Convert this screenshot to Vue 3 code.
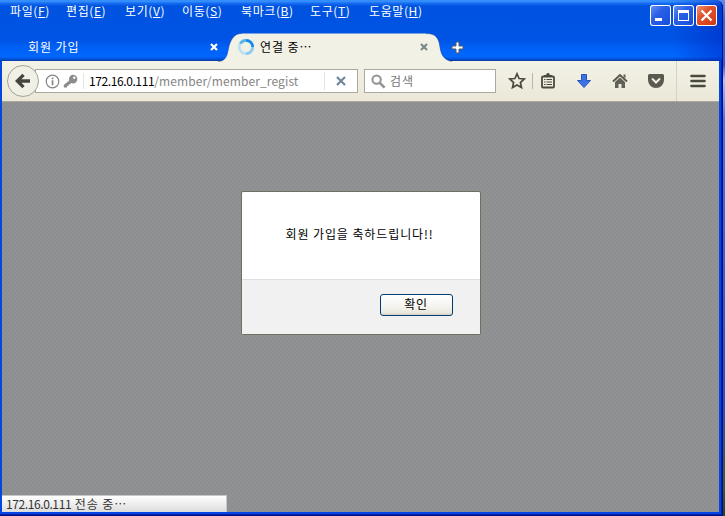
<script setup>
const menus = [
  { label: '파일', key: 'F' },
  { label: '편집', key: 'E' },
  { label: '보기', key: 'V' },
  { label: '이동', key: 'S' },
  { label: '북마크', key: 'B' },
  { label: '도구', key: 'T' },
  { label: '도움말', key: 'H' },
]
</script>

<template>
  <div class="desktop">
    <div class="window">
      <header class="chrome">
        <div class="top-row">
          <nav class="menus">
            <span v-for="m in menus" :key="m.key">{{ m.label }}(<u>{{ m.key }}</u>)</span>
          </nav>
          <div class="controls">
            <button class="ctl" aria-label="minimize">
              <svg width="21" height="21"><rect x="5" y="13" width="7" height="3" fill="#fff" /></svg>
            </button>
            <button class="ctl" aria-label="maximize">
              <svg width="21" height="21"><path d="M5 5h11v11H5z M6 8v7h9V8z" fill="#fff" fill-rule="evenodd" /></svg>
            </button>
            <button class="ctl close" aria-label="close">
              <svg width="21" height="21"><path d="M5.500 5.500l10 10M15.500 5.500l-10 10" stroke="#fff" stroke-width="2.300" /></svg>
            </button>
          </div>
        </div>
        <div class="tabs">
          <div class="tab">
            <span class="tab-title first">회원 가입</span>
            <svg width="8" height="8" viewBox="0 0 8 8"><path d="M1 1l6 6M7 1L1 7" stroke="#fff" stroke-width="2.200" /></svg>
          </div>
          <div class="tab active">
            <svg class="shape" width="234" height="29" viewBox="0 0 234 29">
              <path d="M0 28.500C11 28 9 17 12 10C15 3 18 .5 24 .5H208C216 .5 219 3 221 9C223 17 222 26 234 28.500V29H0Z" fill="#f2f1e5" />
              <path d="M0 28.500C11 28 9 17 12 10C15 3 18 .5 24 .5M208 .5C216 .5 219 3 221 9C223 17 222 26 234 28.500" fill="none" stroke="#073ba4" stroke-opacity=".55" />
            </svg>
            <svg class="spinner" width="18" height="18" viewBox="0 0 18 18" fill="none" stroke-width="2.700">
              <circle cx="9" cy="9" r="6.700" stroke="#b9e0f5" />
              <path d="M9 2.300A6.700 6.700 0 0 1 15.700 9" stroke="#168ce8" />
              <path d="M15.700 9A6.700 6.700 0 0 1 9 15.700" stroke="#8bcbf1" />
              <path d="M3.300 5.500A6.700 6.700 0 0 1 9 2.300" stroke="#58b5ef" />
            </svg>
            <span class="tab-title">연결 중<i>⋯</i></span>
            <svg class="tab-close" width="8" height="8" viewBox="0 0 8 8"><path d="M1 1l6 6M7 1L1 7" stroke="#7e8988" stroke-width="2.200" /></svg>
          </div>
          <svg class="plus" width="13" height="13" viewBox="0 0 13 13"><path d="M5 1h3v4h4v3H8v4H5V8H1V5h4z" fill="#fff" stroke="#4e5d68" stroke-width="1" /></svg>
        </div>
      </header>

      <div class="toolbar">
        <button class="back" aria-label="back">
          <svg width="16" height="16" viewBox="0 0 16 16"><path d="M8.500 1.800L2.300 8l6.200 6.200M3 8h12" fill="none" stroke="#45443c" stroke-width="3.300" /></svg>
        </button>
        <div class="url">
          <svg class="info" width="15" height="15" viewBox="0 0 15 15"><circle cx="7.500" cy="7.500" r="6.300" fill="none" stroke="#858585" stroke-width="1.200" /><path d="M6.700 3.500h1.700v1.700H6.700zM6.700 6.300h1.700v5H6.700z" fill="#858585" /></svg>
          <svg class="keyicon" width="15" height="15" viewBox="0 0 15 15"><path d="M10 .8a4.300 4.300 0 0 1 0 8.600 4 4 0 0 1-1.700-.4L6.800 10.500H5.500V12H4v1.500H.8V11l5.400-4.500A4.300 4.300 0 0 1 10 .8z" fill="#8c8c8c" /><circle cx="11.200" cy="3.800" r="1.200" fill="#fff" /></svg>
          <span class="address"><b class="ip">172.16.0.111</b><span class="path">/member/member_regist</span></span>
          <span class="stop"><svg width="10" height="10" viewBox="0 0 10 10"><path d="M1 1l8 8M9 1L1 9" stroke="#71869a" stroke-width="2.200" /></svg></span>
        </div>
        <div class="search">
          <svg width="15" height="15" viewBox="0 0 15 15" fill="none" stroke="#929292"><circle cx="5.600" cy="5.600" r="4.200" stroke-width="2" /><path d="M8.800 8.800l4.800 4.800" stroke-width="2.600" /></svg>
          <span>검색</span>
        </div>
        <div class="actions">
          <svg class="star" width="18" height="18" viewBox="0 0 18 18"><path d="M9 1.800l2.100 4.700 5.100.5-3.800 3.500 1.100 5.100L9 13l-4.500 2.600 1.100-5.100L1.800 7l5.100-.5z" fill="none" stroke="#4b4a42" stroke-width="1.700" /></svg>
          <i class="sep"></i>
          <svg width="16" height="18" viewBox="0 0 16 18"><path d="M4 4.500h8V3h-2.200A1.800 1.800 0 0 0 8 1 1.800 1.800 0 0 0 6.200 3H4z" fill="#4b4a42" /><rect x="2" y="4.500" width="12" height="11" rx="1" fill="none" stroke="#4b4a42" stroke-width="1.800" /><path d="M4 7.500h1.500M6.500 7.500H12M4 10h1.500M6.500 10H12M4 12.500h1.500M6.500 12.500H12" stroke="#4b4a42" stroke-width="1.100" /></svg>
          <svg width="16" height="18" viewBox="0 0 16 18"><path d="M5.500 2.500h5v6h4L8 15.500 1.500 8.500h4z" fill="#3b73e4" stroke="#2455bd" /></svg>
          <svg width="16" height="18" viewBox="0 0 16 18"><path d="M1 9.500L8 3l7 6.500" fill="none" stroke="#56554b" stroke-width="1.800" /><path d="M11.500 2.500h2v4l-2-2zM8 5.500l5 4.500v6H9.500v-4h-3v4H3v-6z" fill="#626157" /></svg>
          <svg width="18" height="18" viewBox="0 0 18 18"><path d="M2.500 2h13A1.500 1.500 0 0 1 17 3.500V8A8 8 0 0 1 1 8V3.500A1.500 1.500 0 0 1 2.500 2z" fill="#5a594f" /><path d="M5 6.500l4 4 4-4" fill="none" stroke="#f0eee3" stroke-width="2" /></svg>
          <span class="menu-btn"><svg width="16" height="14" viewBox="0 0 16 14"><path d="M1.500 2h13M1.500 7h13M1.500 12h13" stroke="#4a493f" stroke-width="2.600" stroke-linecap="round" /></svg></span>
        </div>
      </div>

      <main class="page">
        <section class="dialog" role="dialog">
          <p>회원 가입을 축하드립니다!!</p>
          <footer><button class="ok">확인</button></footer>
        </section>
        <div class="status"><span class="ip">172.16.0.111</span> <span class="state">전송 중<i>⋯</i></span></div>
      </main>
    </div>
  </div>
</template>

<style>
body { margin: 0; overflow: hidden; }
</style>

<style scoped>
* { box-sizing: border-box; }
svg { display: block; flex: none; }
i { font-style: normal; }
button { padding: 0; font: inherit; }
.desktop {
  width: 725px; height: 516px; padding-right: 2px;
  background: linear-gradient(#6089e8 0, #3566d8 20px, #2c5cd2 65px, #a9c3f5 80px, #4776df 120px, #2454c0 400px, #34602c 485px, #26451c);
  font: 400 12px/16px "Noto Sans CJK KR", sans-serif;
}
.window {
  display: flex; flex-direction: column;
  width: 723px; height: 516px; padding: 0 4px 4px 2px;
  background: #0147e0;
  border-radius: 0 8px 0 0;
  box-shadow: inset -1px -1px #001083, inset -2px -2px #0020b0, inset -3px -3px #0843e3;
}
.chrome {
  flex: none; height: 61px; margin: 0 -3px 0 -2px; padding-left: 2px;
  background: linear-gradient(90deg, transparent 93%, rgba(0, 36, 190, .5)), linear-gradient(#2784fc 0, #3e97ff 1px, #1a70f4 3px, #0053e0 6px, #0054e5 40px, #0062fa 49px, #0068ff 57px, #0051d5 59px, #073ba4 61px);
  border-radius: 0 7px 0 0;
}
.top-row { display: flex; justify-content: space-between; height: 33px; }
.menus {
  display: grid; grid-template-columns: 56px 59px 57px 59px 69px 59px 60px;
  padding: 3px 0 0 8px; height: 22px; color: #fff; white-space: nowrap; letter-spacing: .6px;
}
.menus u { text-underline-offset: 1px; text-decoration-thickness: 1px; }
.controls { display: flex; gap: 2px; padding: 5px 5px 0 0; }
.ctl {
  width: 21px; height: 21px; border: 0; border-radius: 3px;
  background: linear-gradient(135deg, #6b95f3, #2a60e6 40%, #1d55e0 75%, #1746c9);
  box-shadow: inset 0 0 0 1px #fff;
}
.close { background: linear-gradient(135deg, #f09b80, #e0512c 40%, #d8431b 75%, #b93411); }
.tabs { display: flex; height: 28px; }
.tab { display: flex; align-items: center; width: 216px; padding-left: 26px; color: #fff; letter-spacing: .9px; }
.tab-title { width: 182px; margin-top: -1px; }
.active { position: relative; width: 234px; padding-left: 19px; color: #000; }
.shape { position: absolute; left: 0; top: 0; }
.spinner, .active .tab-title, .tab-close { position: relative; }
.active .tab-title { width: 161px; margin-left: 5px; }
.tab-close { margin-left: -1px; }
.plus { align-self: center; margin-left: -1px; }
.toolbar {
  display: flex; flex: none; align-items: center; height: 41px;
  background: linear-gradient(#f3f2e7, #ebe8d8); border-bottom: 1px solid #aaa89b;
}
.back {
  z-index: 1; display: grid; place-items: center; width: 32px; height: 32px; margin-left: 5px;
  background: #f1f0e6; border: 1px solid #a5a397; border-radius: 50%;
}
.url, .search { display: flex; align-items: center; height: 24px; background: #fff; border: 1px solid #aaa99d; }
.url { width: 323px; margin-left: -4px; padding-left: 9px; }
.keyicon { margin-left: 3px; }
.address { flex: 1; margin: -1px 0 0 5px; padding-left: 5px; border-left: 1px solid #e5e4d7; white-space: nowrap; }
.ip { font-weight: inherit; color: #000; letter-spacing: -.4px; }
.path { color: #858585; letter-spacing: .12px; }
.stop { display: grid; place-items: center; width: 33px; height: 18px; border-left: 1px solid #e5e4d7; }
.search { gap: 4px; width: 132px; margin-left: 6px; padding-left: 6px; color: #777; letter-spacing: .9px; }
.search span { margin-top: -1px; }
.actions { display: flex; flex: 1; align-items: center; padding-left: 12px; align-self: stretch; }
.actions > svg + svg { margin-left: 20px; }
.actions > svg:nth-last-child(2) { margin-left: 19px; }
.sep { width: 1px; height: 16px; margin: 0 7px 0 6px; background: #b8b6a9; }
.menu-btn { display: grid; place-items: center; align-self: stretch; flex: 1; margin-left: 11px; border-left: 1px solid #d5d3c6; }
.page {
  display: flex; flex: 1; flex-direction: column; align-items: center; justify-content: space-between;
  min-height: 0; padding-top: 89px;
  background: repeating-conic-gradient(#8c8f91 0 25%, #929292 0 50%) 0 0 / 4px 4px;
}
.dialog { display: flex; flex-direction: column; width: 240px; height: 144px; background: #fff; border: 1px solid #706f60; border-radius: 2px; }
.dialog p { margin: 0; padding: 34px 0 0 44px; flex: 1; white-space: nowrap; color: #000; letter-spacing: .9px; }
.dialog footer { display: flex; justify-content: flex-end; height: 55px; padding: 14px 27px 0 0; background: #f1f1f1; border-top: 1px solid #dfdfdf; }
.ok {
  width: 73px; height: 22px; padding-bottom: 3px; line-height: 16px; color: #000; letter-spacing: .7px;
  background: linear-gradient(#fff, #f4f3ee 60%, #e9e8df 88%, #d6d0c5); border: 1px solid #003c74; border-radius: 3px;
}
.status {
  align-self: flex-start; width: 225px; height: 17px; padding-left: 4px; color: #333; line-height: 15px;
  background: linear-gradient(#fff, #dcdcdc); border: solid #c8c8c8; border-width: 1px 1px 0 0;
}
.status .ip { color: inherit; }
.state { margin-left: 1px; letter-spacing: .9px; }
</style>
